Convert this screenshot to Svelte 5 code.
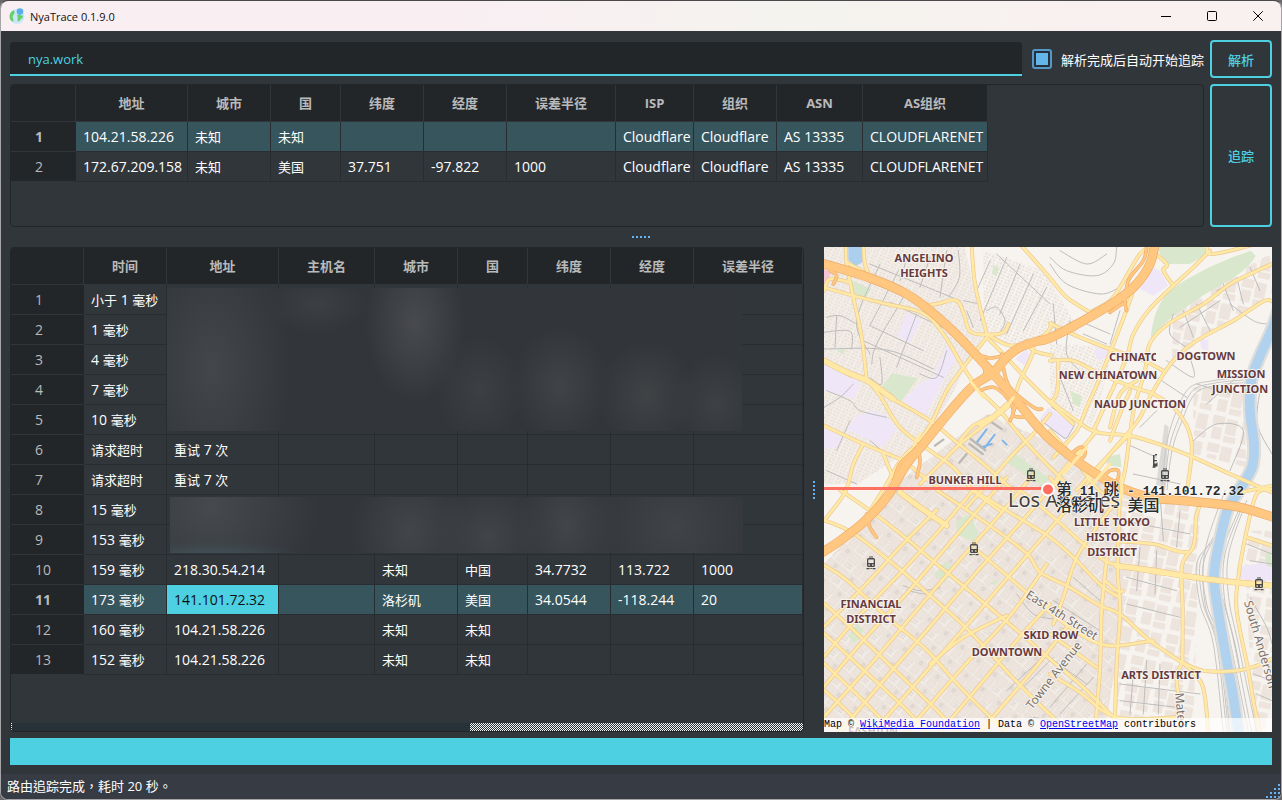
<script>
  const resolveHead = ['地址', '城市', '国', '纬度', '经度', '误差半径', 'ISP', '组织', 'ASN', 'AS组织'];
  const resolveCols = [65, 112, 83, 70, 83, 83, 109, 78, 83, 86, 125];
  const resolveRows = [
    ['104.21.58.226', '未知', '未知', '', '', '', 'Cloudflare', 'Cloudflare', 'AS 13335', 'CLOUDFLARENET'],
    ['172.67.209.158', '未知', '美国', '37.751', '-97.822', '1000', 'Cloudflare', 'Cloudflare', 'AS 13335', 'CLOUDFLARENET']
  ];

  const hopHead = ['时间', '地址', '主机名', '城市', '国', '纬度', '经度', '误差半径'];
  const hopCols = [73, 83, 112, 96, 83, 70, 83, 83, 109];
  const hopRows = [
    ['小于 1 毫秒', '', '', '', '', '', '', ''],
    ['1 毫秒', '', '', '', '', '', '', ''],
    ['4 毫秒', '', '', '', '', '', '', ''],
    ['7 毫秒', '', '', '', '', '', '', ''],
    ['10 毫秒', '', '', '', '', '', '', ''],
    ['请求超时', '重试 7 次', '', '', '', '', '', ''],
    ['请求超时', '重试 7 次', '', '', '', '', '', ''],
    ['15 毫秒', '', '', '', '', '', '', ''],
    ['153 毫秒', '', '', '', '', '', '', ''],
    ['159 毫秒', '218.30.54.214', '', '未知', '中国', '34.7732', '113.722', '1000'],
    ['173 毫秒', '141.101.72.32', '', '洛杉矶', '美国', '34.0544', '-118.244', '20'],
    ['160 毫秒', '104.21.58.226', '', '未知', '未知', '', '', ''],
    ['152 毫秒', '104.21.58.226', '', '未知', '未知', '', '', '']
  ];

  // Split a string into runs of Han and non-Han text; each run gets its own size.
  const runs = (s) => s.match(/[\u3000-\u9fff\uff00-\uffef]+|[^\u3000-\u9fff\uff00-\uffef]+/g) ?? [];
  const isHan = (s) => /[\u3000-\u9fff\uff00-\uffef]/.test(s);

  // Smooth curve through a flat list of x,y pairs.
  function curve(str) {
    const n = str.trim().split(/[\s,]+/).map(Number);
    const p = [];
    for (let i = 0; i < n.length; i += 2) p.push([n[i], n[i + 1]]);
    let d = `M${p[0]}`;
    for (let i = 0; i < p.length - 1; i++) {
      const a = p[i - 1] ?? p[i], b = p[i], c = p[i + 1], e = p[i + 2] ?? c;
      d += `C${b[0] + (c[0] - a[0]) / 6} ${b[1] + (c[1] - a[1]) / 6} ${c[0] - (e[0] - b[0]) / 6} ${c[1] - (e[1] - b[1]) / 6} ${c[0]} ${c[1]}`;
    }
    return d;
  }

  // Map geometry is kept in thirds of a pixel.
  const roads = [
    '78,0 80,60 100,160 125,280 140,410',
    '130,0 135,60 150,100',
    '12,130 100,155 200,180 310,208 370,270 430,370 480,440 540,500 605,580 670,650 740,720',
    '80,55 150,95 240,145 325,182 405,168 430,205 450,262 500,272 550,265 566,240',
    '12,140 30,105 90,115',
    '455,0 465,120 500,270',
    '600,0 680,90 740,160 810,205',
    '696,238 670,275 575,305 500,270',
    '500,280 545,325 620,405 696,480 760,540',
    '500,280 430,370 380,440 335,535 295,595 245,645 200,720 150,800',
    '696,335 640,320 620,290 640,320 600,410 570,480 490,545 420,600 370,650 300,720',
    '12,350 80,385 145,412 220,465 330,530 410,595 485,655 580,740',
    '145,412 180,455 240,550 330,620 400,670 460,740 540,800',
    '12,545 130,600 245,648 300,690 360,735',
    '130,600 100,660 75,745 12,830',
    '190,630 215,690 240,745',
    '690,510 640,570 580,630 510,710 440,790',
    '560,480 520,515 460,545 420,590',
    // Chinatown and north
    '810,205 870,170 900,130 960,30 990,20 1040,60 1030,80 1060,125',
    '690,238 780,280 870,315 960,345 1030,380',
    '690,350 760,350 840,390 940,430 1000,450 1060,490 1100,545 1115,600 1112,660 1100,745',
    '1170,20 1120,70 1060,125 985,200 940,270 920,340 880,430 820,560',
    '940,140 915,210 880,300 840,400 800,490 770,560 700,640',
    '1356,60 1290,90 1230,120 1150,180 1060,230 1010,270 985,310 975,380 945,480 930,570 915,680 900,738',
    '1356,172 1330,172 1240,230 1130,290 1060,350 1000,440 960,520 930,560 870,630 800,720',
    '1160,0 1175,30 1290,5',
    '690,470 770,530 830,565 930,575 1030,605 1120,640 1230,690 1356,745',
    '830,560 780,620 720,690 690,740',
    '930,570 860,640 770,738',
    '715,350 712,440 695,475',
    '870,550 900,450 950,410',
    '930,440 900,510 870,590',
    '690,560 760,640 820,720 880,780',
    '690,700 730,745 800,790',
    '1260,745 1310,735 1356,725',
    // Downtown, running south-east
    '60,738 150,800 240,868 360,968 470,1058 590,1158 696,1250 790,1330 880,1420',
    '12,828 100,868 230,968 300,1028 440,1153 590,1313 720,1440',
    '12,963 80,1008 200,1118 320,1218 410,1318 510,1418 560,1464',
    '12,1078 100,1158 230,1283 350,1398 410,1464',
    '12,1168 120,1268 250,1388 320,1464',
    '12,1258 130,1370 220,1464',
    '12,1338 80,1400 140,1464',
    '350,738 500,838 620,928 660,985 740,1025 840,1085 900,1110 990,1190 1085,1255',
    '460,738 560,800 690,880 760,940 850,1030 900,1060',
    '600,738 700,820 790,900 855,950 900,965 1000,985 1090,995 1200,1010 1356,1025',
    '470,918 600,1028 696,1110 780,1170 840,1200 895,1205 1000,1190',
    '690,1170 760,1220 830,1270',
    '690,1290 780,1345 890,1420 1070,1420',
    // Downtown, running north-east
    '12,1148 140,1018 250,898 350,798',
    '12,1238 110,1123 240,988 350,868 460,738',
    '12,1328 140,1178 260,1048 380,908 500,768 560,700',
    '12,1418 120,1298 240,1158 400,970 560,788 640,690',
    '60,1464 200,1298 330,1148 440,1018 600,838 720,700',
    '160,1464 340,1258 480,1098 600,958 720,820 790,740',
    '260,1464 430,1268 560,1128 640,1020 680,960',
    '360,1464 500,1298 600,1178 690,1080',
    '480,1464 640,1278 740,1150',
    '330,1260 430,1180 560,1115',
    '700,1140 730,1060 770,940 830,850 890,770',
    '900,738 893,965 900,1100 890,1260 885,1420',
    '860,940 845,1100 840,1270 825,1464',
    '900,892 1000,900 1110,922 1128,820 1130,780 1040,760',
    '1110,922 1085,970 1088,1100 1087,1255',
    '1087,1255 1150,1280 1250,1280 1310,1265 1356,1245',
    '1087,1255 1070,1300 1075,1360 1070,1464',
    '1087,1255 1140,1310 1155,1360 1165,1464',
    '1356,735 1310,750 1280,860 1255,1000 1250,1100 1285,1280 1300,1370 1320,1464',
    '1280,880 1356,905',
    '855,1010 890,1040 910,1042'
  ].map(curve);

  const avenues = [
    '12,350 80,385 145,412 220,465',
    '240,745 300,790 380,845',
    '570,478 520,520 480,540',
    '890,965 1000,980 1090,995 1200,1010 1356,1025'
  ].map(curve);

  const motorways = [
    '0,56 150,102 260,150 330,200 400,262 470,335 520,390 590,470 650,545 700,595 790,665 890,725 990,760 1090,770 1250,788 1370,823',
    '0,930 60,890 130,835 200,760 260,660 310,600 400,490 460,425 520,385 560,340 600,310 650,292 690,282 790,230 890,170 950,120 990,60 1005,0'
  ].map(curve);

  const ramps = [
    '470,330 510,342 550,335',
    '485,350 495,385 480,410',
    '545,330 550,370 570,430 640,490 665,495',
    '480,440 520,430 560,460 580,500 570,530',
    '590,480 580,515 620,520',
    '290,600 300,650 290,700',
    '310,600 240,660 215,740',
    '915,180 925,110 970,50 980,10',
    '870,205 910,180 920,200',
    '740,640 780,610 795,620 790,640 760,650',
    '850,700 870,680 895,680 890,710 860,710',
    '140,810 150,850 170,880',
    '30,80 50,95 40,120'
  ].map(curve);

  const lanes = [
    '20,220 60,215 110,240', '12,265 90,262 95,315', '12,315 200,318 340,375', '50,215 45,310',
    '180,60 110,230 150,330', '235,80 150,245', '250,160 170,300 155,360', '290,210 230,370',
    '150,245 310,320', '130,290 370,400', '210,175 420,275', '330,40 300,130', '380,20 360,160',
    '415,20 418,100 385,160', '150,60 420,170', '265,30 240,110', '380,320 350,400 300,390', '180,340 185,420 150,400',
    '510,50 470,140', '560,40 480,230', '600,60 540,210', '640,90 560,270', '680,130 610,260', '530,30 690,180',
    '430,170 480,180', '500,200 530,190 555,230 540,265', '440,200 460,250',
    '20,440 90,470 120,500 200,520', '12,490 60,460 100,420', '90,530 50,620', '150,590 210,640', '20,680 110,720',
    '690,60 740,120 840,150 900,130', '690,40 740,80 830,95 880,60 890,10', '720,20 800,60 860,30',
    '700,180 710,300', '750,230 740,330 790,390', '800,240 870,270', '790,270 860,300', '900,200 870,300', '720,400 760,500',
    '1060,210 1050,270 1100,310', '1090,200 1120,280', '1130,180 1170,260', '1080,250 1200,170', '1210,120 1240,200', '1250,100 1270,180', '1190,140 1330,70', '1290,70 1320,140', '1040,350 1120,400 1110,340', '1010,400 1100,460',
    '1230,180 1300,230 1340,240', '1160,480 1250,400', '1120,590 1190,540 1270,560 1230,680', '1320,440 1312,540 1356,630', '1130,420 1230,450',
    '920,600 1010,640', '960,550 1010,500', '940,690 1080,720',
    '920,1000 1070,1040', '960,910 950,1040', '1010,920 1005,1050', '920,1080 1080,1120', '940,1290 930,1410', '980,1250 970,1410', '1020,1260 1015,1410', '900,1320 1140,1350', '900,1370 1070,1390', '1020,750 1030,890', '1080,800 1070,910', '910,830 1110,870', '1190,1000 1240,1180 1260,1280',
    '590,1050 640,1110 700,1125', '610,1330 700,1240', '620,1180 690,1240 800,1320', '560,1340 700,1210', '690,1390 800,1260', '720,1410 820,1300', '640,1420 760,1440', '700,1070 840,1160', '760,1000 840,1070',
    '1280,900 1330,920 1356,930', '1290,950 1356,960', '1290,1060 1340,1150 1356,1200', '1300,1290 1356,1310', '1310,1350 1356,1370',
    '260,1038 320,1050 360,1030', '250,1025 300,1040 350,1033'
  ].map(curve);

  const rails = [
    '1270,400 1180,410 1110,430 1070,500 1040,600 1025,738',
    '1270,408 1180,418 1118,440 1078,520 1048,610 1033,738',
    '1270,416 1190,424 1126,448 1086,530 1056,620 1041,738',
    '1170,900 1130,960 1140,1080 1180,1200 1210,1464',
    '1180,880 1140,960 1150,1080 1190,1200 1220,1464',
    '1195,860 1150,960 1160,1080 1200,1200 1230,1464',
    '1215,740 1155,920 1155,1080 1195,1200 1226,1464',
    '1260,790 1205,930 1202,1060 1232,1200 1285,1464',
    '1270,780 1215,930 1213,1060 1243,1200 1295,1464',
    '1280,770 1226,930 1226,1060 1255,1200 1310,1464'
  ].map(curve);

  const river = curve('1375,200 1354,260 1318,340 1294,410 1290,500 1302,600 1296,670 1260,735 1222,800 1195,910 1182,1000 1196,1110 1222,1260 1240,1360 1256,1470');

  const labels = [
    [100, 15, 'ANGELINO'], [100, 30, 'HEIGHTS'], [141, 237, 'BUNKER HILL'], [382, 113, 'DOGTOWN'],
    [284, 132, 'NEW CHINATOWN'], [417, 131, 'MISSION'], [416, 146, 'JUNCTION'], [316, 161, 'NAUD JUNCTION'],
    [288, 279, 'LITTLE TOKYO'], [288, 294, 'HISTORIC'], [288, 309, 'DISTRICT'], [47, 361, 'FINANCIAL'],
    [47, 376, 'DISTRICT'], [227, 392, 'SKID ROW'], [183, 409, 'DOWNTOWN'], [337, 432, 'ARTS DISTRICT'], [49, 488, 'FASHION']
  ];
  const stations = [[207, 228], [150, 302], [47, 316], [341, 228], [435, 337]];

  let host = $state('nya.work');
  let auto = $state(true);
</script>

{#snippet mixed(text)}{#each runs(text) as r}{#if isHan(r)}<span class="han">{r}</span>{:else}{r}{/if}{/each}{/snippet}

{#snippet grid(label, cols, head, rows, active, current)}
  <table aria-label={label} style:width="{cols.reduce((a, b) => a + b, 0)}px">
    <colgroup>{#each cols as w}<col style:width="{w}px" />{/each}</colgroup>
    <thead>
      <tr><td class="corner"></td>{#each head as h}<th scope="col">{@render mixed(h)}</th>{/each}</tr>
    </thead>
    <tbody>
      {#each rows as row, i}
        <tr class:active={i === active}>
          <th scope="row">{i + 1}</th>
          {#each row as cell, j}<td class:current={i === active && j === current}>{@render mixed(cell)}</td>{/each}
        </tr>
      {/each}
    </tbody>
  </table>
{/snippet}

<div class="window">
  <header class="titlebar">
    <svg class="logo" viewBox="0 0 16 16" aria-hidden="true">
      <circle cx="8" cy="8.4" r="7.4" fill="#c9e6f8" />
      <path d="M4.6 2.2C1.8 3.6.4 6.2.6 9c.2 2.4 1.500 4 3.200 4.700.9-.8.7-2.300.2-3.500-.6-1.400-.5-2.500.600-3.500 1.100-1 1.400-3.200 0-4.500z" fill="#66cf68" />
      <path d="M8.300 6.500l5.600 1.200c.3 1.500-.8 2.500-2 3.300-1 .7-1.300 2.200-2.700 2.500-1.200-1-.7-2.300-.4-3.300.3-1.300-.9-2.300-.5-3.700z" fill="#66cf68" />
      <circle cx="11" cy="3.600" r="3.300" fill="#5aaeea" />
    </svg>
    <span class="title">NyaTrace 0.1.9.0</span>
    <button aria-label="最小化"><svg viewBox="0 0 10 10"><path d="M0 5.500h10" /></svg></button>
    <button aria-label="最大化"><svg viewBox="0 0 10 10"><rect x=".5" y=".5" width="9" height="9" rx="1" /></svg></button>
    <button aria-label="关闭"><svg viewBox="0 0 10 10"><path d="M.3.3l9.400 9.400M9.700.3L.3 9.700" /></svg></button>
  </header>

  <main>
    <div class="query">
      <input class="host" type="text" aria-label="主机" bind:value={host} />
      <label class="auto"><input type="checkbox" bind:checked={auto} /><span>解析完成后自动开始追踪</span></label>
      <button class="action">解析</button>
    </div>
    <div class="resolved">
      <div class="frame">{@render grid('解析结果', resolveCols, resolveHead, resolveRows, 0, -1)}</div>
      <button class="action">追踪</button>
    </div>
    <div class="split horizontal"><i></i><i></i><i></i><i></i><i></i></div>

    <div class="trace">
      <div class="frame hops">
        {@render grid('路由追踪', hopCols, hopHead, hopRows, 10, 1)}
        <div class="mask first"></div>
        <div class="mask second"></div>
        <div class="scroll"><div class="tick"></div><div class="thumb"></div></div>
      </div>
      <div class="split vertical"><i></i><i></i><i></i><i></i><i></i></div>
      <div class="map">
        <svg viewBox="0 0 448 485" preserveAspectRatio="xMidYMid slice">
          <defs>
            <pattern id="houses" width="22" height="19" patternUnits="userSpaceOnUse" patternTransform="rotate(24)">
              <path d="M1 2h6v5h-6zM10 1h7v6h-7zM2 10h7v6h-7zM13 11h5v5h-5z" fill="#e9dfd7" />
            </pattern>
            <pattern id="blocks" width="64" height="58" patternUnits="userSpaceOnUse" patternTransform="rotate(40)">
              <path d="M2 3h26v22h-26zM33 4h27v30h-27zM4 30h22v24h-22zM34 39h14v15h-14z" fill="#ede4dd" stroke="#e2d6cd" stroke-width="1.500" />
              <path d="M12 10h8v8h-8zM50 42h8M50 50h8" fill="none" stroke="#c9c4bf" stroke-width="2" />
            </pattern>
            <pattern id="sheds" width="90" height="84" patternUnits="userSpaceOnUse" patternTransform="rotate(12)">
              <path d="M4 4h34v24h-34zM46 8h30v44h-30zM8 38h26v34h-26zM46 60h34v16h-34z" fill="#ede4dd" stroke="#e4dad2" stroke-width="1.500" />
            </pattern>
          </defs>
          <g transform="translate(-4 -3) scale(.33333)" fill="none" stroke-linecap="round" stroke-linejoin="round">
            <path d="M0 0h1380v1480H0z" fill="#f7f4ef" />
            <path d="M12 0h420l60 270-90 170-90 150-200 130H12z" fill="#f3eee9" />
            <path d="M12 0h420l60 270-90 170-90 150-200 130H12z" fill="url(#houses)" />
            <path d="M490 20l180 60 110 180-180 60-110-40z" fill="url(#houses)" />
            <path d="M690 300l190 10-60 240-130-80z" fill="url(#houses)" />
            <path d="M12 960l230-250 260-200 200 90 200 140 10 380-60 350H12z" fill="#f1ebe5" />
            <path d="M12 960l230-250 260-200 200 90 200 140 10 380-60 350H12z" fill="url(#blocks)" />
            <path d="M900 740l240 40-20 680H880z" fill="url(#sheds)" />
            <path d="M1060 190l290-160 6 120-300 200zM1120 430h150l10 240-160-40zM1270 860h90v600h-60z" fill="url(#sheds)" />
            <g fill="#efe7f8">
              <path d="M260 205l42 25-32 66-38-20zM380 305l32 30-38 70-60 110-65-45 50-50 40-20z" />
              <path d="M12 355l110 60-20 50-90-25zM110 515l50-15 35 15 35 40-40 55-110-55zM12 550l60 30-20 30-40 5zM620 315l15 30-20 20-30-20z" />
              <path d="M990 65l30 15 25 45-45 30-40-20zM820 320l35-20 10 35-30 15zM685 490l80 55-28 45-80-62zM1140 290l25-5v35l-20-5zM1250 970l105-20v60l-100-5zM480 750l30-5-5 25-25 5z" />
            </g>
            <path d="M695 490l66 44q6 5 2 11l-20 34q-5 7-12 2l-66-50" stroke="#b9b7b8" stroke-width="3" />
            <g fill="#d9e8cc">
              <path d="M95 110l60 25-20 28-35-15zM82 60l60 20-10 20-45-10zM215 388l78 15-50 70-60-40zM50 318l25-3-5 18zM575 622l112 80-20 24-112-74z" />
              <path d="M1010 0h140l10 30-50 30h-80zM992 285c10-100 40-140 110-180 70-40 120-60 190-85l15 15c-30 60-120 90-180 135-60 40-90 60-135 115z" />
              <path d="M375 952l28 22-30 42-30-22zM410 830l40-20 25 60-15 22-50-20zM258 868l20 15-12 18-14-15zM110 1140l22 18-30 42-18-24zM520 62l18 10-10 25-12-10zM1335 930l20-10v50l-15-5zM850 640l50-10 5 40-40-5zM750 440l35 15-5 35-20-10zM540 1002l-15 22-18-8z" />
            </g>
            <path d="M85 0h42v55l-20 12-22-20z" fill="#aad0ee" />
            <path d="M12 75l20 10-8 35-12 8z" fill="#f5c5d5" />
            <g stroke="#bdbcbb" stroke-width="3">{#each lanes as d}<path {d} />{/each}</g>
            <g stroke="#c6c5c4" stroke-width="3">{#each rails as d}<path {d} />{/each}</g>
            <path d="M1034 540l12 8-10 180-28-4z" fill="#c9c8c7" opacity=".6" />
            <path d={river} stroke="#e0deda" stroke-width="42" />
            <path d={river} stroke="#b1d2ef" stroke-width="29" stroke-linecap="butt" />
            <g stroke="#7fb6ea" stroke-width="6"><path d="M500 556l-30 40 22 18 32-42M515 600l-32 10M548 590l12 12" /></g>
            <g stroke="#bcb9b5" stroke-width="7"><path d="M452 585l44 34M448 600l40 30M515 535l30 20M440 630l-22 26M345 605l25-18" /></g>
            <g stroke="#ecc994" stroke-width="12">{#each roads as d}<path {d} />{/each}</g>
            <g stroke="#ecc994" stroke-width="19">{#each avenues as d}<path {d} />{/each}</g>
            <g stroke="#ffe9a5" stroke-width="8">{#each roads as d}<path {d} />{/each}</g>
            <g stroke="#ffe9a5" stroke-width="15">{#each avenues as d}<path {d} />{/each}</g>
            <g stroke="#eeac6b" stroke-width="11">{#each ramps as d}<path {d} />{/each}</g>
            <g stroke="#eeac6b" stroke-width="28">{#each motorways as d}<path {d} />{/each}</g>
            <g stroke="#ffc780" stroke-width="7">{#each ramps as d}<path {d} />{/each}</g>
            <g stroke="#ffc780" stroke-width="24">{#each motorways as d}<path {d} />{/each}</g>
            <g stroke="#ffe9a5" stroke-width="9"><path d="M450 410l40 50M560 490l20-30M300 570l-18 34M800 610l-70 80M870 660l-60 70M905 700v60" /></g>
          </g>

          {#each stations as [x, y]}
            <g class="station" transform="translate({x} {y})">
              <path fill-rule="evenodd" d="M-2-6.500h4v1h-4zM-2.500-5h5q1.500 0 1.500 1.500v6q0 1.500-1.500 1.500h-5q-1.500 0-1.500-1.500v-6q0-1.500 1.500-1.500zM-2.700-3.500v3.500h5.400v-3.500zM-2.500 1.300v1.400h1.400v-1.400zM1.100 1.300v1.400h1.400v-1.400zM-4.500 5h3v1.300h-3zM1.500 5h3v1.300h-3zM-1 5h2v.8h-2z" />
            </g>
          {/each}
          <path class="station" d="M331 207h2v1.500h-2.500v4.500h2.500v1.300h-2.500v2.200h2v-1h1v4h-4.500v-11.500h2zM328.500 219.500h3v1.300h-3z" />

          {#each labels as [x, y, t]}<text class="place" {x} {y}>{t}</text>{/each}
          <svg x="284" y="100" width="48" height="20"><text class="place start" x="1" y="14">CHINATOWN</text></svg>
          <g class="street">
            <text transform="translate(201 350) rotate(32)">East 4th Street</text>
            <text transform="translate(208 463) rotate(-52)">Towne Avenue</text>
            <text transform="translate(420 355) rotate(74)">South Anderson</text>
            <text transform="translate(351 446) rotate(85)">Mateo Street</text>
          </g>
          <text class="town" x="184" y="260">Los Angeles</text>
          <path d="M0 241.500h224" stroke="#ff6f61" stroke-width="3" />
          <circle cx="224" cy="242.500" r="6" fill="#ff6f61" stroke="#fff" stroke-width="2" />
          <text class="pin" x="232" y="248"><tspan class="big">第</tspan> 11 <tspan class="big">跳</tspan> - 141.101.72.32</text>
          <text class="pin" x="232" y="264"><tspan class="big">洛杉矶</tspan> - <tspan class="big">美国</tspan></text>
        </svg>
        <p class="credit">Map © <a href="#wikimedia">WikiMedia Foundation</a> | Data © <a href="#osm">OpenStreetMap</a> contributors</p>
      </div>
    </div>
    <div class="progress" role="progressbar" aria-label="追踪进度" aria-valuenow="100"></div>
  </main>

  <footer>
    <span lang="zh-TW">{@render mixed('路由追踪完成，耗时 20 秒。')}</span>
    <svg class="grip" viewBox="0 0 14 14" aria-hidden="true">
      <path d="M12 0h2v2h-2zM12 4h2v2h-2zM12 8h2v2h-2zM12 12h2v2h-2zM8 4h2v2h-2zM8 8h2v2h-2zM8 12h2v2h-2zM4 8h2v2h-2zM4 12h2v2h-2zM0 12h2v2h-2z" />
    </svg>
  </footer>
</div>

<style>
  :global(body) { margin: 0; background: #6b696b; }
  * { box-sizing: border-box; }
  .window {
    height: 100vh;
    min-height: 760px;
    display: flex;
    flex-direction: column;
    border: 1px solid #a5a5a7;
    border-top-color: #4a484b;
    border-radius: 8px;
    overflow: hidden;
    background: #31363b;
    color: #fff;
    font: 14px "Open Sans", "Noto Sans CJK SC", sans-serif;
  }
  button, input { font: inherit; margin: 0; padding: 0; }
  .han { font-size: 13px; font-family: "Noto Sans CJK SC", sans-serif; line-height: 1; }

  .titlebar {
    height: 30px;
    flex: none;
    display: flex;
    align-items: center;
    padding-left: 8px;
    background: linear-gradient(90deg, #f9eff3 0%, #f9eff3 36%, #f4f3ee 62%, #f9f0f0 88%);
    color: #111;
  }
  .logo { width: 16px; height: 16px; margin-right: 5px; }
  .title { flex: 1; font-size: 11px; }
  .titlebar button { width: 46px; height: 30px; border: 0; background: none; display: grid; place-items: center; }
  .titlebar button svg { width: 10px; height: 10px; overflow: visible; fill: none; stroke: #000; }

  main { flex: 1; min-height: 0; display: flex; flex-direction: column; padding: 9px; }
  .query { display: flex; align-items: center; height: 38px; margin-bottom: 6px; }
  .host {
    flex: 1;
    min-width: 0;
    height: 34px;
    padding: 2px 18px 0;
    border: 0;
    border-bottom: 2px solid #4dd0e1;
    border-radius: 4px 4px 0 0;
    outline: 0;
    background: #232629;
    color: #4dd0e1;
    font-size: 13px;
  }
  .auto { display: flex; align-items: center; gap: 9px; padding: 0 6px 0 10px; font: 13px "Noto Sans CJK SC", sans-serif; white-space: nowrap; }
  .auto input {
    appearance: none;
    width: 20px;
    height: 20px;
    border: 2px solid #5398c8;
    border-radius: 3px;
    background: #2b3036;
  }
  .auto input:checked { background: linear-gradient(#64b5e9, #64b5e9) center / 12px 12px no-repeat #263039; }
  .action {
    flex: none;
    width: 62px;
    align-self: stretch;
    border: 2px solid #4dd0e1;
    border-radius: 4px;
    background: none;
    color: #4dd0e1;
    font: 500 13px "Noto Sans CJK SC", sans-serif;
  }
  .resolved { display: flex; gap: 6px; height: 143px; }
  .frame { position: relative; flex: 1; min-width: 0; border: 1px solid #232629; border-radius: 4px; overflow: hidden; }

  table { table-layout: fixed; border-collapse: separate; border-spacing: 0; }
  th, td { height: 30px; padding: 0 0 0 7px; white-space: nowrap; line-height: 20px; text-align: left; }
  td { border-right: 1px solid #292d31; border-bottom: 1px solid #292d31; }
  th, .corner { background: #232629; color: #b9babb; border-right: 1px solid #31363b; border-bottom: 1px solid #31363b; }
  thead th, .corner { height: 37px; }
  thead th { padding: 0; text-align: center; font-size: 13px; font-weight: 700; }
  tbody th { padding-left: 24px; font-weight: 400; border-right-color: #232629; }
  .active th { font-weight: 700; }
  .active td { background: #37555c; }
  .active .current { background: #4dd0e1; color: #111; }

  .split { display: flex; align-items: center; justify-content: center; gap: 2px; flex: none; }
  .split i { width: 2px; height: 2px; background: #64b5f6; }
  .horizontal { height: 20px; }
  .vertical { width: 20px; flex-direction: column; }

  .trace { flex: 1; min-height: 0; display: flex; }
  .hops { flex: 792 1 0; display: flex; flex-direction: column; justify-content: space-between; }
  .mask { position: absolute; background-color: #32363a; }
  .first {
    left: 156px;
    top: 40px;
    width: 575px;
    height: 143px;
    background-image:
      radial-gradient(ellipse 80px 140px at 45px 80px, #43474b, transparent),
      radial-gradient(ellipse 50px 30px at 150px 16px, #3c4044, transparent),
      radial-gradient(ellipse 50px 80px at 248px 34px, #484a4e, transparent),
      radial-gradient(ellipse 44px 54px at 313px 102px, #3c4044, transparent),
      radial-gradient(ellipse 48px 60px at 393px 98px, #404448, transparent),
      radial-gradient(ellipse 48px 56px at 479px 108px, #3f4346, transparent),
      radial-gradient(ellipse 44px 50px at 549px 116px, #3d4044, transparent);
  }
  .second {
    left: 159px;
    top: 249px;
    width: 573px;
    height: 56px;
    background-image:
      radial-gradient(ellipse 90px 16px at 40px 60px, #40535a, transparent),
      radial-gradient(ellipse 110px 100px at 40px 10px, #46494d, transparent),
      radial-gradient(ellipse 60px 70px at 240px 34px, #424549, transparent),
      radial-gradient(ellipse 56px 60px at 318px 40px, #414549, transparent),
      radial-gradient(ellipse 50px 70px at 396px 28px, #424549, transparent),
      radial-gradient(ellipse 90px 80px at 505px 30px, #404448, transparent);
  }
  .scroll { display: flex; justify-content: space-between; height: 8px; background: #263238; }
  .tick { width: 1px; background: repeating-linear-gradient(#fff 0 1px, transparent 1px 2px); }
  .thumb { width: 42%; background: repeating-conic-gradient(#f4f4f4 0 25%, #263238 0 50%) 0 0 / 2px 2px; }

  .map { position: relative; flex: 448 1 0; min-width: 0; overflow: hidden; background: #f6f3ee; }
  .map > svg { display: block; width: 100%; height: 100%; }
  .place { font: 700 11px "Noto Sans", sans-serif; fill: #663a3f; text-anchor: middle; stroke: #f8f4ef; stroke-width: 2px; paint-order: stroke; stroke-linejoin: round; }
  .start { text-anchor: start; }
  .street { font: 12px "Noto Sans", sans-serif; fill: #78706b; stroke: #f8f4ef; stroke-width: 2px; paint-order: stroke; }
  .town { font: 20px "Noto Sans", sans-serif; fill: #404040; stroke: #f8f4ef; stroke-width: 2px; paint-order: stroke; }
  .pin { font: 700 13px "Liberation Mono", "Noto Sans CJK SC", monospace; fill: #2a2c2e; white-space: pre; stroke: #fff; stroke-width: 1px; paint-order: stroke; }
  .big { font-size: 16px; font-weight: 500; font-family: "Noto Sans CJK SC", sans-serif; }
  .station { fill: #4b4b4b; }
  .credit {
    position: absolute;
    left: 0;
    right: 0;
    bottom: 0;
    height: 14px;
    margin: 0;
    font: 10px/14px "Liberation Mono", monospace;
    color: #000;
    background: rgba(255, 255, 255, .7);
    white-space: nowrap;
  }
  .credit a { color: #0000f0; }
  .progress { flex: none; height: 27px; margin-top: 6px; background: #4dd0e1; }

  footer {
    flex: none;
    height: 25px;
    display: flex;
    align-items: center;
    justify-content: space-between;
    padding: 0 1px 1px 6px;
    background: #373b43;
    font-size: 13px;
  }
  footer .han { font-family: "Noto Sans CJK TC", sans-serif; }
  .grip { width: 14px; height: 14px; align-self: flex-end; fill: #64b5f6; }
</style>
